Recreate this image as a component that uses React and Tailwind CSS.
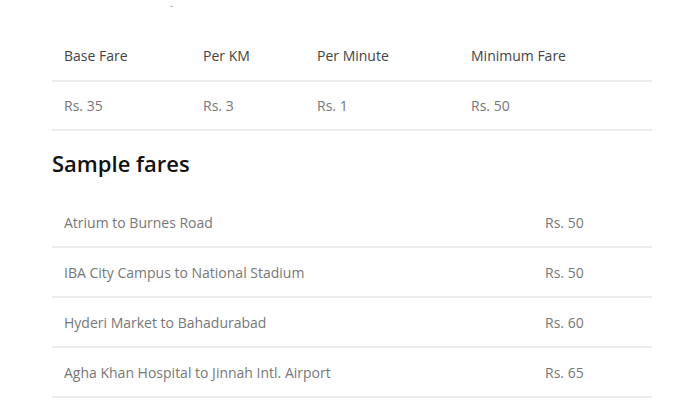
import React from 'react';

const rates = [
  { label: 'Base Fare', value: 'Rs. 35', w: 'w-[139px]' },
  { label: 'Per KM', value: 'Rs. 3', w: 'w-[114px]' },
  { label: 'Per Minute', value: 'Rs. 1', w: 'w-[154px]' },
  { label: 'Minimum Fare', value: 'Rs. 50', w: 'flex-1' },
];

const samples = [
  { route: 'Atrium to Burnes Road', fare: 'Rs. 50' },
  { route: 'IBA City Campus to National Stadium', fare: 'Rs. 50' },
  { route: 'Hyderi Market to Bahadurabad', fare: 'Rs. 60' },
  { route: 'Agha Khan Hospital to Jinnah Intl. Airport', fare: 'Rs. 65' },
];

const App = () => {
  return (
    <div className="min-h-screen bg-white font-['Open_Sans',sans-serif] text-[14px]">
      {/* stray mark at the top */}
      <div className="h-[31px] pl-[170px] pt-[6px]">
        <div className="w-[3px] h-[1px] bg-[#bbb]"></div>
      </div>

      <div className="ml-[52px] w-[600px]">
        {/* rate table */}
        <div className="flex h-[51px] items-center border-b-2 border-[#ececec] text-[#444]">
          {rates.map((r) => (
            <div key={r.label} className={`${r.w} pl-3`}>{r.label}</div>
          ))}
        </div>
        <div className="flex h-[49px] items-center border-b-2 border-[#ececec] text-[#777]">
          {rates.map((r) => (
            <div key={r.label} className={`${r.w} pl-3`}>{r.value}</div>
          ))}
        </div>

        <h2 className="h-[67px] pt-[18px] text-[22px] font-semibold text-[#111] leading-[28px]">
          Sample fares
        </h2>

        {/* sample fares */}
        {samples.map((s) => (
          <div key={s.route} className="flex h-[50px] items-center border-b-2 border-[#ececec] text-[#777]">
            <div className="w-[481px] pl-3">{s.route}</div>
            <div className="flex-1 pl-3">{s.fare}</div>
          </div>
        ))}
      </div>
    </div>
  );
};

export default App;
